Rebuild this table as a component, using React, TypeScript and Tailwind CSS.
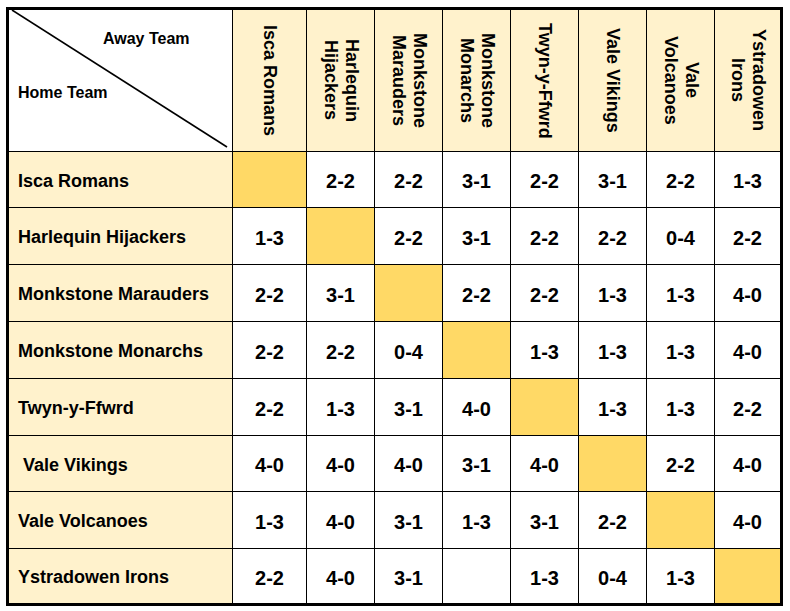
import { Fragment } from "react";

const awayTeams = [
  ["Isca Romans"],
  ["Harlequin", "Hijackers"],
  ["Monkstone", "Marauders"],
  ["Monkstone", "Monarchs"],
  ["Twyn-y-Ffwrd"],
  ["Vale Vikings"],
  ["Vale", "Volcanoes"],
  ["Ystradowen", "Irons"],
];

const results: { home: string; scores: string[] }[] = [
  { home: "Isca Romans", scores: ["", "2-2", "2-2", "3-1", "2-2", "3-1", "2-2", "1-3"] },
  { home: "Harlequin Hijackers", scores: ["1-3", "", "2-2", "3-1", "2-2", "2-2", "0-4", "2-2"] },
  { home: "Monkstone Marauders", scores: ["2-2", "3-1", "", "2-2", "2-2", "1-3", "1-3", "4-0"] },
  { home: "Monkstone Monarchs", scores: ["2-2", "2-2", "0-4", "", "1-3", "1-3", "1-3", "4-0"] },
  { home: "Twyn-y-Ffwrd", scores: ["2-2", "1-3", "3-1", "4-0", "", "1-3", "1-3", "2-2"] },
  { home: " Vale Vikings", scores: ["4-0", "4-0", "4-0", "3-1", "4-0", "", "2-2", "4-0"] },
  { home: "Vale Volcanoes", scores: ["1-3", "4-0", "3-1", "1-3", "3-1", "2-2", "", "4-0"] },
  { home: "Ystradowen Irons", scores: ["2-2", "4-0", "3-1", "", "1-3", "0-4", "1-3", ""] },
];

export default function App() {
  return (
    <div className="min-h-screen bg-white pl-[6px] pt-[7px] font-['Liberation_Sans',Arial,sans-serif] font-bold text-black">
      <div className="grid w-[777px] grid-cols-[223px_73px_67px_67px_67px_67px_67px_67px_65px] grid-rows-[141px_55px_56px_56px_56px_56px_55px_56px_54px] gap-px border-[3px] border-black bg-black">
        {/* Corner cell */}
        <div className="relative flex flex-col bg-white pt-[21px] text-[16px] leading-[16px]">
          <svg className="absolute inset-0" width="223" height="141" viewBox="0 0 223 141">
            <line x1="3" y1="0" x2="218" y2="137" stroke="black" strokeWidth="1.6" />
          </svg>
          <span className="pl-[94px]">Away Team</span>
          <span className="mt-[38px] pl-[9px]">Home Team</span>
        </div>

        {awayTeams.map((lines, i) => (
          <div key={i} className="flex items-center justify-center bg-[#fff2cc]">
            <span className="text-center text-[18px] leading-[21px] [writing-mode:vertical-rl]">
              {lines.map((l, j) => (
                <span key={j} className="block">
                  {l}
                </span>
              ))}
            </span>
          </div>
        ))}

        {results.map((row, r) => (
          <Fragment key={r}>
            <div className="flex items-center whitespace-pre bg-[#fff2cc] pl-[9px] pt-[3px] text-[18px]">
              {row.home}
            </div>
            {row.scores.map((s, c) =>
              c === r ? (
                <div key={c} className="bg-[#ffd966]" />
              ) : (
                <div key={c} className="flex items-center justify-center bg-white pt-[3px] text-[20px]">
                  {s}
                </div>
              )
            )}
          </Fragment>
        ))}
      </div>
    </div>
  );
}
